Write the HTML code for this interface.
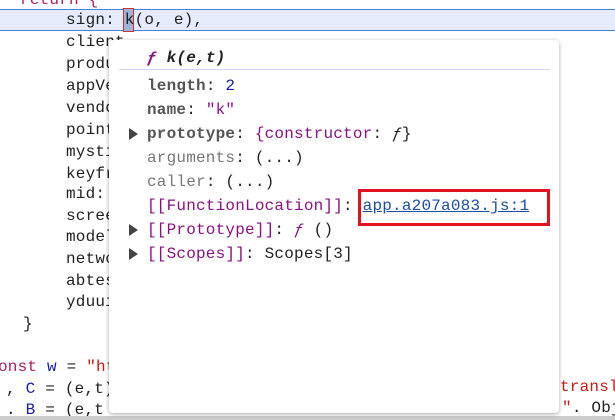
<!DOCTYPE html>
<html><head><meta charset="utf-8"><style>
body{margin:0;width:615px;height:420px;overflow:hidden;background:#fff;position:relative;font-family:"Liberation Mono","DejaVu Sans Mono",monospace;font-size:16px;letter-spacing:0.2px;color:#222}
.l{position:absolute;white-space:pre;line-height:20px}
.hl{position:absolute;left:0;top:9px;width:615px;height:22px;background:#e6ebfb;border-top:1px solid #4a7ee0;border-bottom:1px solid #4a7ee0;box-sizing:border-box}
.pk{color:#a71d5d}.bl{color:#1a1aa6}.rd{color:#c41a16}
.pop{position:absolute;left:109px;top:40px;width:450px;height:373px;background:#fff;border-radius:4px;box-shadow:0 1px 4px rgba(0,0,0,.35)}
.pl{position:absolute;white-space:pre;line-height:20px;left:38px}
.b{font-weight:bold;color:#555}
.g{color:#777}
.pu{color:#881280}
.tri{position:absolute;left:20px;width:0;height:0;border-top:6px solid transparent;border-bottom:6px solid transparent;border-left:9px solid #444}
</style></head><body>
<div class="l pk" style="left:20px;top:-10px">return {</div>
<div class="hl"></div>
<div style="position:absolute;left:123px;top:8px;width:11px;height:24px;background:#9fb3d8;border:1px solid #c33;box-sizing:border-box"></div>
<div class="l" style="left:66px;top:10px">sign: k(o, e),</div>
<div class="l" style="left:66px;top:32px">client</div>
<div class="l" style="left:66px;top:54px">produ</div>
<div class="l" style="left:66px;top:76px">appVe</div>
<div class="l" style="left:66px;top:98px">vendo</div>
<div class="l" style="left:66px;top:120px">point</div>
<div class="l" style="left:66px;top:142px">mysti</div>
<div class="l" style="left:66px;top:164px">keyfr</div>
<div class="l" style="left:66px;top:184px">mid:</div>
<div class="l" style="left:66px;top:206px">scree</div>
<div class="l" style="left:66px;top:227px">model</div>
<div class="l" style="left:66px;top:249px">netwo</div>
<div class="l" style="left:66px;top:271px">abtes</div>
<div class="l" style="left:66px;top:292px">yduui</div>
<div class="l" style="left:23px;top:314px">}</div>
<div class="l" style="left:-2px;top:357px"><span class="pk">onst</span> <span class="bl">w</span> = <span class="rd">"ht</span></div>
<div class="l" style="left:6px;top:379px">, <span class="bl">C</span> = (e,t)</div>
<div class="l" style="left:6px;top:400px">. <span class="bl">B</span> = (e,t</div>
<div class="l rd" style="left:560px;top:377px">transl</div>
<div class="l" style="left:562px;top:398px"><span class="rd">"</span>. Obj</div>
<div style="position:absolute;left:0;top:416px;width:615px;height:4px;background:#ccc"></div>
<div class="pop">
<div class="pl" style="top:8px;color:#222;font-weight:bold;font-style:italic"><span class="pu">ƒ</span> k(e,t)</div>
<div style="position:absolute;left:10px;right:9px;top:29px;height:1px;background:#cfd8f0"></div>
<div class="pl" style="top:36px"><span class="b">length</span>: <span class="bl">2</span></div>
<div class="pl" style="top:60px"><span class="b">name</span>: <span class="pu">"k"</span></div>
<div class="tri" style="top:88px"></div>
<div class="pl" style="top:84px"><span class="b">prototype</span>: <span class="pu">{constructor</span>: <i>ƒ</i>}</div>
<div class="pl" style="top:108px"><span class="g">arguments</span>: (...)</div>
<div class="pl" style="top:132px"><span class="g">caller</span>: (...)</div>
<div class="pl" style="top:156px"><span class="pu">[[FunctionLocation]]</span>: <span style="color:#1a4ea0;text-decoration:underline">app.a207a083.js:1</span></div>
<div style="position:absolute;left:249px;top:149px;width:192px;height:37px;border:3px solid #e3121e;box-sizing:border-box"></div>
<div class="tri" style="top:184px"></div>
<div class="pl" style="top:180px"><span class="pu">[[Prototype]]</span>: <i class="pu">ƒ</i> ()</div>
<div class="tri" style="top:208px"></div>
<div class="pl" style="top:204px"><span class="pu">[[Scopes]]</span>: Scopes[3]</div>
</div>
</body></html>
